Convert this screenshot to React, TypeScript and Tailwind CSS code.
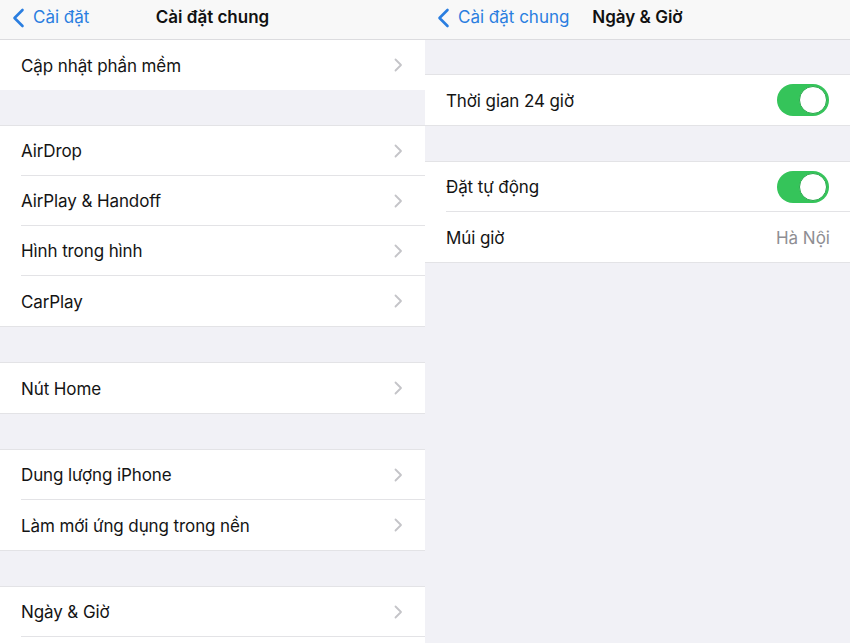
import React from "react";

const font = { fontFamily: "Inter, 'Noto Sans', 'Liberation Sans', sans-serif" };

function Chevron() {
  return (
    <svg width="9" height="14" viewBox="0 0 9 14" className="shrink-0">
      <path d="M1.5 1.5 L7 7 L1.5 12.5" fill="none" stroke="#c4c4c8" strokeWidth="1.8" strokeLinecap="round" strokeLinejoin="round" />
    </svg>
  );
}

function BackChevron() {
  return (
    <svg width="13" height="20" viewBox="0 0 13 20" className="shrink-0">
      <path d="M10.5 2 L2.5 10 L10.5 18" fill="none" stroke="#2a7ee0" strokeWidth="2.6" strokeLinecap="round" strokeLinejoin="round" />
    </svg>
  );
}

function Toggle() {
  return (
    <div className="w-[52px] h-[32px] rounded-full bg-[#35c45a] relative shrink-0">
      <div className="absolute right-[2px] top-[2px] w-[28px] h-[28px] rounded-full bg-white border border-[#2aa84c]" />
    </div>
  );
}

function Row({ label, last, right }: { label: string; last?: boolean; right?: React.ReactNode }) {
  return (
    <div className="h-[50px] pl-[21px] bg-white shrink-0">
      <div className={"h-full flex items-center pr-[22px] " + (last ? "" : "border-b border-[#e3e3e6]")}>
        <span className="text-[17px] text-[#141414] flex-1 font-normal tracking-[-0.1px] pt-[3px]">{label}</span>
        {right ?? <Chevron />}
      </div>
    </div>
  );
}

function Gap({ h }: { h: string }) {
  return <div className={"shrink-0 border-b border-[#e3e3e6] " + h} />;
}

function Nav({ back, title }: { back: string; title: string }) {
  return (
    <div className="h-[40px] shrink-0 bg-[#f8f8f8] border-b border-[#dcdcdf] relative flex items-center">
      <div className="flex items-center pl-[12px] gap-[8px] pb-[4px]">
        <BackChevron />
        <span className="text-[17px] text-[#2a7ee0]">{back}</span>
      </div>
      <div className="absolute inset-0 flex items-center justify-center pointer-events-none pb-[4px]">
        <span className="text-[17px] font-semibold text-[#111]">{title}</span>
      </div>
    </div>
  );
}

export default function App() {
  return (
    <div className="w-[850px] h-[643px] flex overflow-hidden bg-[#f1f1f6]" style={font}>
      <div className="w-[425px] h-full flex flex-col bg-[#f1f1f6] overflow-hidden">
        <Nav back="Cài đặt" title="Cài đặt chung" />
        <div className="bg-white shrink-0">
          <Row label="Cập nhật phần mềm" last />
        </div>
        <Gap h="h-[36px]" />
        <div className="bg-white border-b border-[#e3e3e6] shrink-0">
          <Row label="AirDrop" />
          <Row label="AirPlay & Handoff" />
          <Row label="Hình trong hình" />
          <Row label="CarPlay" last />
        </div>
        <Gap h="h-[36px]" />
        <div className="bg-white border-b border-[#e3e3e6] shrink-0">
          <Row label="Nút Home" last />
        </div>
        <Gap h="h-[36px]" />
        <div className="bg-white border-b border-[#e3e3e6] shrink-0">
          <Row label="Dung lượng iPhone" />
          <Row label="Làm mới ứng dụng trong nền" last />
        </div>
        <Gap h="h-[36px]" />
        <div className="bg-white shrink-0">
          <Row label="Ngày & Giờ" />
          <div className="h-[50px] bg-white shrink-0" />
        </div>
      </div>
      <div className="w-[425px] h-full flex flex-col bg-[#f1f1f6] overflow-hidden">
        <Nav back="Cài đặt chung" title="Ngày & Giờ" />
        <Gap h="h-[35px]" />
        <div className="bg-white border-b border-[#e3e3e6] shrink-0">
          <Row label="Thời gian 24 giờ" last right={<div className="mr-[-1px]"><Toggle /></div>} />
        </div>
        <Gap h="h-[36px]" />
        <div className="bg-white border-b border-[#e3e3e6] shrink-0">
          <Row label="Đặt tự động" right={<div className="mr-[-1px]"><Toggle /></div>} />
          <Row label="Múi giờ" last right={<span className="text-[17px] text-[#8e8e93] mr-[-2px] pt-[3px]">Hà Nội</span>} />
        </div>
      </div>
    </div>
  );
}
